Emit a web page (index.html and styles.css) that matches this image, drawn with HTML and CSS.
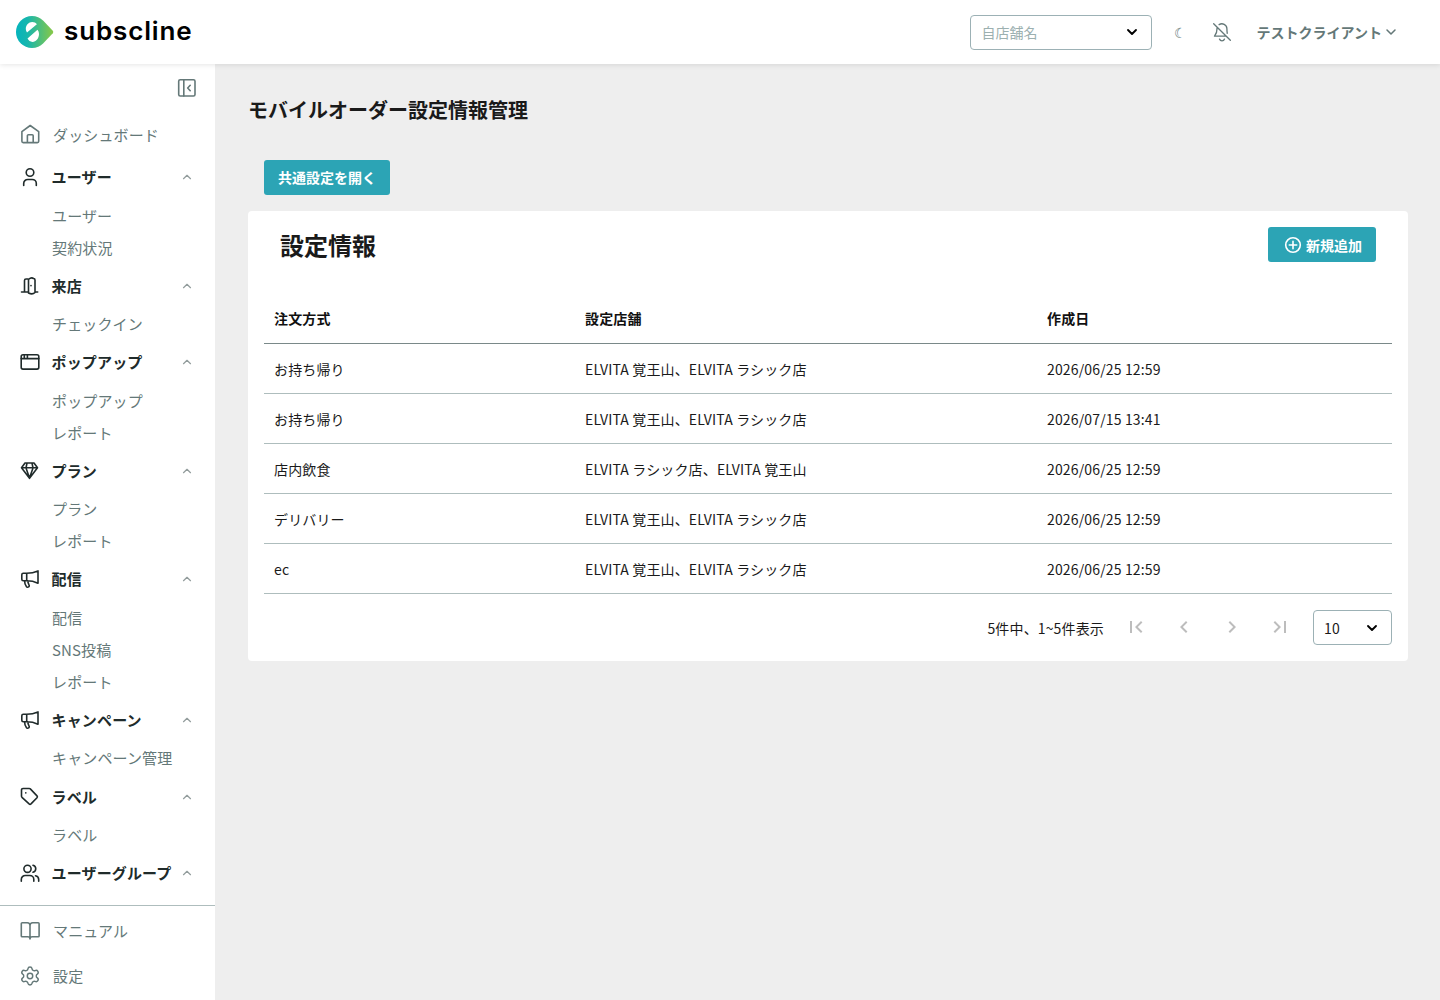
FILE: index.html
```html
<!DOCTYPE html>
<html lang="ja">
<head>
<meta charset="utf-8">
<title>モバイルオーダー設定情報管理</title>
<link rel="stylesheet" href="styles.css">
</head>
<body>
<svg class="sprite" width="0" height="0" aria-hidden="true">
  <symbol id="up" viewBox="0 0 24 24"><path d="m6 15 6-6 6 6"/></symbol>
  <symbol id="down" viewBox="0 0 24 24"><path d="m6 9 6 6 6-6"/></symbol>
  <symbol id="megaphone" viewBox="0 0 20 20"><path d="M3.300 4.300h3.400c4 0 7.800-.8 11.300-2.400v12.300c-3.500-1.600-7.300-2.400-11.300-2.400H3.300a1.500 1.500 0 0 1-1.500-1.500V5.800a1.500 1.500 0 0 1 1.500-1.500zM6.700 4.300v7.500M4.600 11.800c0 2.200.6 4.200 1.800 5.800.5.7 1.500.8 2.200.3.700-.5.900-1.500.3-2.200-.6-1-1-2-1.100-3.800"/></symbol>
</svg>
<header class="topbar">
  <div class="logo">
    <svg width="38" height="32" viewBox="0 0 38 32">
      <defs><linearGradient id="brand"><stop offset="0" stop-color="#05b4bd"/><stop offset=".3" stop-color="#16b6ae"/><stop offset="1" stop-color="#88c846"/></linearGradient></defs>
      <path d="M16 0a16 16 0 1 0 0 32c4.500 0 8.500-1.800 11.300-4.700L36.800 17.300q1-1.300 0-2.600L27.300 4.700A16 16 0 0 0 16 0z" fill="url(#brand)"/>
      <path d="M11 16.500a5.500 5.500 0 0 1-1.200-3.400C9.800 9 12.700 6 16.200 6c2 0 3.600.8 4.700 2.200zM21.500 13.800a6 6 0 0 1 1.500 4.200c0 4.400-2.900 7.900-6.500 7.900-2.200 0-4-1.300-5-3.300z" fill="#fff"/>
    </svg>
    <svg class="wordmark" width="134" height="32" viewBox="0 0 134 32"><text x="0" y="24" textLength="128.5" lengthAdjust="spacingAndGlyphs">subscline</text></svg>
  </div>
  <div class="tools">
    <div class="select store"><span>自店舗名</span><svg class="line" width="16" height="16"><use href="#down"/></svg></div>
    <span class="moon">☾</span>
    <svg class="line bell" width="20" height="20" viewBox="0 0 24 24"><path d="M9 20.500a3.200 3.200 0 0 0 6 0M18.300 13.500c-.3-1.400-.4-3-.4-5.500A6 6 0 0 0 8.500 3.200M6.200 6.500C6 7 6 7.500 6 8c0 6.500-3 8.500-3 9h14M2 2l20 20"/></svg>
    <div class="account"><span>テストクライアント</span><svg class="line" width="16" height="16"><use href="#down"/></svg></div>
  </div>
</header>
<div class="shell">
  <aside class="sidebar">
    <div class="collapse"><svg class="line" width="20" height="20" viewBox="0 0 20 20"><rect x="1.700" y="1.700" width="16.300" height="16.300" rx="1.500"/><path d="M6.800 2v16M13.200 7.300 10.700 10l2.500 2.700"/></svg></div>
    <nav class="menu">
      <a class="item dash"><svg class="line" width="20" height="20" viewBox="0 0 20 20"><path d="M1.900 7.700 10.200 1.500l8.500 6.200v9.600a1.300 1.300 0 0 1-1.300 1.300H3.200a1.300 1.300 0 0 1-1.300-1.300zM7.400 18.500v-6.800a1 1 0 0 1 1-1h3.800a1 1 0 0 1 1 1v6.800"/></svg><span>ダッシュボード</span></a>

      <a class="group"><svg class="line" width="20" height="20" viewBox="0 0 20 20"><circle cx="10" cy="5.500" r="3.800"/><path d="M3.700 18.500v-2a4 4 0 0 1 4-4h4.600a4 4 0 0 1 4 4v2"/></svg><span>ユーザー</span><svg class="line caret" width="14" height="14"><use href="#up"/></svg></a>
      <a class="sub">ユーザー</a>
      <a class="sub">契約状況</a>

      <a class="group"><svg class="line" width="20" height="20" viewBox="0 0 20 20"><path d="M1.500 16h3V4.500a1.500 1.500 0 0 1 1.500-1.500h2M15 16h2.700M4.500 16h4M8.500 3.300Q11.500 1 13.500 2.500 15 2.500 15 4v12.500q-2.500 2.500-6.500.5zM11 9.500v.3"/></svg><span>来店</span><svg class="line caret" width="14" height="14"><use href="#up"/></svg></a>
      <a class="sub">チェックイン</a>

      <a class="group"><svg class="line" width="20" height="20" viewBox="0 0 20 20"><rect x="1.200" y="2.800" width="17.600" height="14.300" rx="1.800"/><path d="M1.200 6.600h17.600M4.300 3v3.300M7.400 3v3.300"/></svg><span>ポップアップ</span><svg class="line caret" width="14" height="14"><use href="#up"/></svg></a>
      <a class="sub">ポップアップ</a>
      <a class="sub">レポート</a>

      <a class="group"><svg class="line" width="20" height="20" viewBox="0 0 20 20"><path d="M5 2h9l3.500 4.800-8 10.500-8-10.500zM1.500 6.800h16M6 7l3.500 10L13 7M6 7l1-5M13 7l-1-5"/></svg><span>プラン</span><svg class="line caret" width="14" height="14"><use href="#up"/></svg></a>
      <a class="sub">プラン</a>
      <a class="sub">レポート</a>

      <a class="group"><svg class="line" width="20" height="20"><use href="#megaphone"/></svg><span>配信</span><svg class="line caret" width="14" height="14"><use href="#up"/></svg></a>
      <a class="sub">配信</a>
      <a class="sub">SNS投稿</a>
      <a class="sub">レポート</a>

      <a class="group"><svg class="line" width="20" height="20"><use href="#megaphone"/></svg><span>キャンペーン</span><svg class="line caret" width="14" height="14"><use href="#up"/></svg></a>
      <a class="sub">キャンペーン管理</a>

      <a class="group"><svg class="line" width="20" height="20" viewBox="0 0 20 20"><path d="M1.500 3A1.500 1.500 0 0 1 3 1.500h6.300q.6 0 1 .4l6.700 7q.8.900 0 1.800l-6 6.200q-1 .8-1.900 0L2 10.300q-.5-.5-.5-1.200zM5.800 5.800v.2"/></svg><span>ラベル</span><svg class="line caret" width="14" height="14"><use href="#up"/></svg></a>
      <a class="sub">ラベル</a>

      <a class="group"><svg class="line" width="20" height="20" viewBox="0 0 20 20"><circle cx="7.500" cy="5.800" r="3.600"/><path d="M1.300 18.200v-1.700a4 4 0 0 1 4-4h4.500a4 4 0 0 1 4 4v1.700M13 2.300a3.600 3.600 0 0 1 0 7M15.500 12.700a4 4 0 0 1 3.200 3.900v1.600"/></svg><span>ユーザーグループ</span><svg class="line caret" width="14" height="14"><use href="#up"/></svg></a>
    </nav>
    <div class="bottom">
      <a class="item"><svg class="line" width="20" height="20" viewBox="0 0 20 20"><path d="M10 4.500a2.700 2.700 0 0 0-2.700-2.700H2.200a.9.900 0 0 0-.9.900v12.200c0 .5.400.9.900.9h5.500c1.300 0 2.300.8 2.300 2.200 0-1.400 1-2.200 2.300-2.200h5.900c.5 0 .9-.4.900-.9V2.700a.9.900 0 0 0-.9-.9h-5.500A2.700 2.700 0 0 0 10 4.500zv13"/></svg><span>マニュアル</span></a>
      <a class="item"><svg class="line gear" width="20" height="20" viewBox="1 1 22 22"><path d="M9.700 4.100a2.340 2.340 0 0 1 4.600 0 2.340 2.340 0 0 0 3.300 1.900 2.340 2.340 0 0 1 2.400 4 2.340 2.340 0 0 0 0 4 2.340 2.340 0 0 1-2.400 4 2.340 2.340 0 0 0-3.300 1.900 2.340 2.340 0 0 1-4.600 0A2.340 2.340 0 0 0 6.400 18 2.340 2.340 0 0 1 4 14a2.340 2.340 0 0 0 0-4 2.340 2.340 0 0 1 2.400-4 2.340 2.340 0 0 0 3.300-1.900z"/><circle cx="12" cy="12" r="3"/></svg><span>設定</span></a>
    </div>
  </aside>
  <main class="content">
    <h1>モバイルオーダー設定情報管理</h1>
    <button class="btn common">共通設定を開く</button>
    <section class="card">
      <div class="card-head">
        <h2>設定情報</h2>
        <button class="btn add"><svg class="line" width="18" height="18" viewBox="0 0 18 18"><circle cx="9" cy="9" r="7.300"/><path d="M9 5.300v7.400M5.300 9h7.400"/></svg>新規追加</button>
      </div>
      <table>
        <thead><tr><th class="c1">注文方式</th><th class="c2">設定店舗</th><th>作成日</th></tr></thead>
        <tbody>
          <tr><td>お持ち帰り</td><td>ELVITA 覚王山、ELVITA ラシック店</td><td>2026/06/25 12:59</td></tr>
          <tr><td>お持ち帰り</td><td>ELVITA 覚王山、ELVITA ラシック店</td><td>2026/07/15 13:41</td></tr>
          <tr><td>店内飲食</td><td>ELVITA ラシック店、ELVITA 覚王山</td><td>2026/06/25 12:59</td></tr>
          <tr><td>デリバリー</td><td>ELVITA 覚王山、ELVITA ラシック店</td><td>2026/06/25 12:59</td></tr>
          <tr><td>ec</td><td>ELVITA 覚王山、ELVITA ラシック店</td><td>2026/06/25 12:59</td></tr>
        </tbody>
      </table>
      <div class="pager">
        <span class="count">5件中、1~5件表示</span>
        <svg width="24" height="24" viewBox="0 0 24 24"><path d="M18.410 16.590 13.820 12l4.590-4.590L17 6l-6 6 6 6zM6 6h2v12H6z"/></svg>
        <svg width="24" height="24" viewBox="0 0 24 24"><path d="M15.410 7.410 14 6l-6 6 6 6 1.410-1.410L10.830 12z"/></svg>
        <svg width="24" height="24" viewBox="0 0 24 24"><path d="M10 6 8.590 7.410 13.170 12l-4.580 4.590L10 18l6-6z"/></svg>
        <svg width="24" height="24" viewBox="0 0 24 24"><path d="M5.590 7.410 10.180 12l-4.590 4.590L7 18l6-6-6-6zM16 6h2v12h-2z"/></svg>
        <div class="select size"><span>10</span><svg class="line" width="16" height="16"><use href="#down"/></svg></div>
      </div>
    </section>
  </main>
</div>
</body>
</html>
```
FILE: styles.css
```css
* { box-sizing: border-box; }
body {
  margin: 0;
  height: 1000px;
  display: flex;
  flex-direction: column;
  overflow: hidden;
  background: #eee;
  color: #1a1a1a;
  font: 14px/20px "Noto Sans CJK JP", sans-serif;
}
h1, h2 { margin: 0; }
.sprite { display: none; }
.line { fill: none; stroke: currentColor; stroke-width: 1.6; stroke-linecap: round; stroke-linejoin: round; flex: none; }

.topbar {
  height: 64px;
  flex: none;
  display: flex;
  align-items: center;
  justify-content: space-between;
  padding: 0 41px 0 16px;
  background: #fff;
  box-shadow: 0 1px 5px rgba(0, 0, 0, .1);
  z-index: 1;
}
.logo { display: flex; gap: 10px; }
.wordmark text { font: 600 25px Inter, sans-serif; letter-spacing: .8px; fill: #000; }
.tools { display: flex; align-items: center; color: #647878; }
.select {
  height: 35px;
  display: flex;
  align-items: center;
  justify-content: space-between;
  border: 1px solid #9cb1b5;
  border-radius: 4px;
  background: #fff;
}
.select .line { color: #000; stroke-width: 2.8; }
.store { width: 182px; padding: 0 11px; color: #9cb0b0; }
.moon { width: 14px; margin-left: 22px; font-size: 14px; text-align: center; }
.bell { margin-left: 24px; }
.account { display: flex; align-items: center; gap: 1px; margin-left: 25px; font-weight: 700; }
.account span { padding-bottom: 1px; }
.account .line { stroke-width: 2.3; }

.shell { flex: 1; min-height: 0; display: flex; }
.sidebar {
  width: 215px;
  flex: none;
  display: flex;
  flex-direction: column;
  background: #fff;
  color: #647878;
  font-size: 15px;
  letter-spacing: .13px;
}
.collapse { height: 48px; flex: none; display: flex; align-items: center; justify-content: flex-end; padding-right: 18px; }
.menu { flex: 1; min-height: 0; overflow: hidden; }
.item { height: 45px; display: flex; align-items: center; gap: 13px; padding-left: 20px; }
.dash { height: 43px; }
.dash span { padding-top: 2px; }
.group { height: 44.56px; display: flex; align-items: center; gap: 12px; padding: 0 21px 0 20px; color: #202b2b; font-weight: 700; white-space: nowrap; }
.group span { width: 123px; margin-left: -.4px; }
.caret { margin-left: -6.6px; color: #929c9c; stroke-width: 2; }
.sub { height: 32px; display: flex; align-items: center; padding-left: 52px; }
.bottom { height: 95px; flex: none; padding-top: 2px; border-top: 1px solid #aebdbd; }

.content { flex: 1; min-width: 0; padding: 30px 32px 0 33px; }
h1 { font-size: 20px; line-height: 32px; }
.btn {
  height: 35px;
  display: flex;
  align-items: center;
  justify-content: center;
  border: 0;
  border-radius: 3px;
  background: #2ca4b5;
  color: #fff;
  font: 700 14px/20px "Noto Sans CJK JP", sans-serif;
}
.common { width: 126px; margin: 34px 0 16px 16px; padding: 0 0 1px; }
.card { height: 450px; padding: 16px; border-radius: 4px; background: #fff; }
.card-head { height: 68px; display: flex; align-items: flex-start; justify-content: space-between; padding: 0 16px; }
h2 { font-size: 24px; line-height: 36px; }
.add { width: 108px; padding: 0 0 0 2px; gap: 4px; }
table { width: 100%; border-collapse: separate; border-spacing: 0; table-layout: fixed; letter-spacing: .15px; }
th, td { height: 50px; padding: 0 10px; text-align: left; border-bottom: 1px solid #aebdbd; }
th { height: 49px; padding-bottom: 2px; border-color: #7a8989; color: #111; }
.c1 { width: 311px; }
.c2 { width: 462px; }
.pager { display: flex; align-items: center; justify-content: flex-end; gap: 24px; margin-top: 16px; fill: #bdbdbd; letter-spacing: .15px; }
.pager > svg { margin-bottom: 1px; }
.count { margin-right: -4px; }
.size { width: 79px; padding: 0 11px 0 10px; }
.pager .size { margin-left: -3px; }
```
